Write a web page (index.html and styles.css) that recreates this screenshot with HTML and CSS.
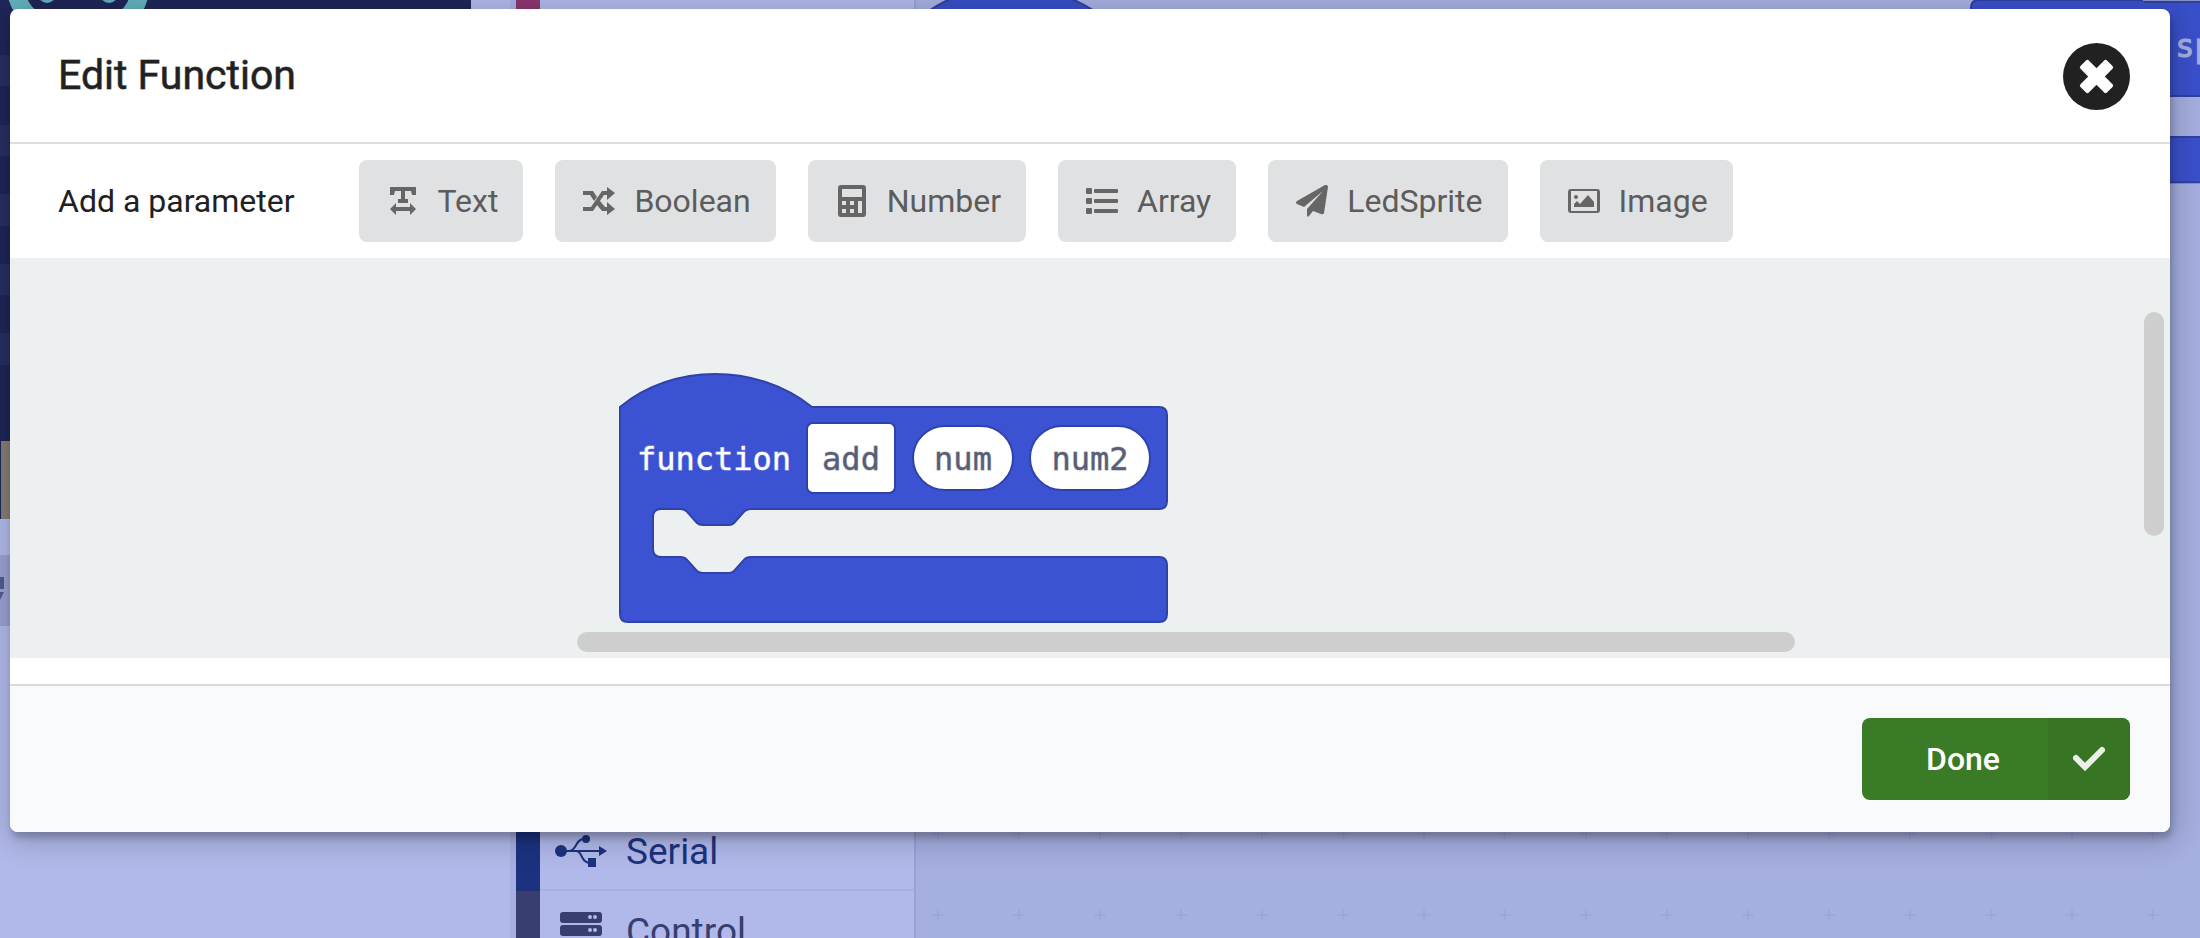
FILE: index.html
```html
<!DOCTYPE html>
<html lang="en">
<head>
<meta charset="utf-8">
<title>Edit Function</title>
<link rel="stylesheet" href="styles.css">
</head>
<body>
<div class="editor" aria-hidden="true">
  <div class="simulator">
    <svg class="board" width="471" height="519" viewBox="0 0 471 519">
      <rect width="471" height="519" fill="#1f2657"/>
      <path d="M0 55h40v31H0zM0 125h40v31H0zM0 194h40v32H0zM0 264h40v31H0zM0 333h40v32H0z" fill="#272f61"/>
      <path d="M14-24C15 0 22 18 44 24h70c20-6 27-24 28-48" fill="none" stroke="#62b0bb" stroke-width="18"/>
      <circle cx="47" cy="-6" r="9" fill="#62b0bb"/><circle cx="109" cy="-6" r="9" fill="#62b0bb"/>
      <path d="M1 441h60v78H1z" fill="#857d74"/>
    </svg>
    <div class="sim-bar">
      <svg width="12" height="72" viewBox="0 0 12 72"><path d="M0 22h4v12H0zM0 37h4l-4 8z" fill="#525a92"/></svg>
    </div>
  </div>
  <div class="toolbox">
    <div class="category basic"></div>
    <div class="category serial">
      <svg width="54" height="34" viewBox="0 0 54 34"><g fill="none" stroke="currentColor" stroke-width="2"><path d="M6 17h40M15 17c8 0 6-12 15-12M22 17c7 0 4 12 15 12"/></g><circle cx="7" cy="17" r="6" fill="currentColor"/><circle cx="32" cy="5" r="4" fill="currentColor"/><path d="M34 24h8v9h-8zM45 12l8 5-8 5z" fill="currentColor"/></svg>
      <span>Serial</span>
    </div>
    <div class="category control">
      <svg width="54" height="38" viewBox="0 0 54 38"><g fill="currentColor"><rect x="6" width="42" height="11" rx="3"/><rect x="6" y="13" width="42" height="11" rx="3"/><rect x="6" y="26" width="42" height="11" rx="3"/></g><g fill="#b1b9ea"><circle cx="36" cy="5" r="2"/><circle cx="41" cy="5" r="2"/><circle cx="36" cy="18" r="2"/><circle cx="41" cy="18" r="2"/></g></svg>
      <span>Control</span>
    </div>
  </div>
  <div class="workspace">
    <svg width="100%" height="100%">
      <defs><pattern id="grid" x="-18" y="-16" width="81" height="81" patternUnits="userSpaceOnUse"><path d="M34 40h12M40 34v12" stroke="#98a1d6"/></pattern></defs>
      <rect width="100%" height="100%" fill="url(#grid)"/>
      <path d="M4 18C53-24 134-24 188 18z" fill="#384fc5" stroke="#2f409f" stroke-width="2"/>
      <path d="M1055 183V8q0-8 8-8h164l3 2h100v94h-180v41h180v45z" fill="#3a50cb" stroke="#2f409f" stroke-width="2"/>
      <path d="M1227 0h60" stroke="#8791cb" stroke-width="2"/>
      <text x="1240" y="57" class="code-peek">.sp</text>
    </svg>
  </div>
</div>

<main class="modal" role="dialog" aria-labelledby="title">
  <header class="modal-header">
    <h1 id="title">Edit Function</h1>
    <button class="close" type="button" aria-label="Close"><svg width="67" height="67" viewBox="0 0 68 68"><circle cx="34" cy="34" r="34" fill="#212121"/><g fill="#fff" transform="rotate(45 34 34)"><rect x="15" y="28" width="38" height="12" rx="2"/><rect x="28" y="15" width="12" height="38" rx="2"/></g></svg></button>
  </header>
  <section class="params">
    <span class="params-label">Add a parameter</span>
    <button class="param" type="button"><svg viewBox="0 0 32 32"><path d="M3 2h26v8h-4l-1-4h-6v8h3v4H11v-4h3V6H8l-1 4H3zM3 24l6-6v4h14v-4l6 6-6 6v-4H9v4z"/></svg>Text</button>
    <button class="param" type="button"><svg viewBox="0 0 32 32"><path d="M24 2l8 6-8 7v-5h-3L10 26H0v-4h8L19 6h5zM0 6h10l4 6-3 4-4-6H0zM17 16l5 6h2v-5l8 7-8 6v-4h-5l-5-6z"/></svg>Boolean</button>
    <button class="param" type="button"><svg viewBox="0 0 32 32"><path fill-rule="evenodd" d="M5 0h22q3 0 3 3v26q0 3-3 3H5q-3 0-3-3V3q0-3 3-3zM6 4v8h20V4zM6 16v4h4v-4zM14 16v4h4v-4zM22 16v4h4v-4zM6 24v4h4v-4zM14 24v4h4v-4zM22 20v8h4v-8z"/></svg>Number</button>
    <button class="param" type="button"><svg viewBox="0 0 32 32"><g><rect y="3" width="6" height="6" rx="1"/><rect y="13" width="6" height="6" rx="1"/><rect y="23" width="6" height="6" rx="1"/><rect x="8" y="4" width="24" height="4" rx="1"/><rect x="8" y="14" width="24" height="4" rx="1"/><rect x="8" y="24" width="24" height="4" rx="1"/></g></svg>Array</button>
    <button class="param" type="button"><svg viewBox="0 0 32 32"><path d="M30 0q2 0 2 2l-4 26q-1 2-3 1l-8-3-4 5q-2 2-2-1v-6L27 6 8 22l-7-3q-2-1 0-3L29 0z"/></svg>LedSprite</button>
    <button class="param" type="button"><svg viewBox="0 0 32 32"><path fill-rule="evenodd" d="M3 4h26q3 0 3 3v18q0 3-3 3H3q-3 0-3-3V7q0-3 3-3zM3 6v20h26V6z"/><circle cx="8" cy="12" r="2"/><path d="M6 22v-3l3-3 3 3 8-9 6 7v5z"/></svg>Image</button>
  </section>
  <section class="canvas" aria-label="Function definition">
    <svg class="block" width="550" height="252" viewBox="0 0 550 252">
      <path d="M1 36C54-8 138-8 193 36H540q8 0 8 8V130q0 8-8 8H132c-4 0-6 1-8 4l-9 10c-2 2-3 2-5 2H84c-3 0-4 0-6-2l-9-10c-2-3-4-4-8-4H42q-8 0-8 8v32q0 8 8 8H61c4 0 6 1 8 4l9 10c2 2 3 2 6 2h26c2 0 3 0 5-2l9-10c2-3 4-4 8-4H540q8 0 8 8v49q0 8-8 8H9q-8 0-8-8z" fill="#3b53d3" stroke="#2f42a9" stroke-width="2"/>
      <g fill="#fff" stroke="#2f42a9" stroke-width="2"><rect x="188" y="52" width="88" height="70" rx="6"/><rect x="294" y="55" width="100" height="64" rx="32"/><rect x="411" y="55" width="120" height="64" rx="32"/></g>
      <g class="block-text"><text x="18" y="99" class="keyword">function</text><text x="232" y="99" text-anchor="middle">add</text><text x="344" y="99" text-anchor="middle">num</text><text x="471" y="99" text-anchor="middle">num2</text></g>
    </svg>
    <div class="scroll-x"></div>
    <div class="scroll-y"></div>
  </section>
  <footer class="modal-footer">
    <button class="done" type="button"><span class="done-label">Done</span><span class="done-icon"><svg width="32" height="26" viewBox="0 0 32 26"><path d="M3 12l9 9L29 4" fill="none" stroke="#ebf1e9" stroke-width="6" stroke-linejoin="miter" stroke-linecap="round"/></svg></span></button>
  </footer>
</main>
</body>
</html>
```

FILE: styles.css
```css
* { box-sizing: border-box; }
body {
  margin: 0;
  height: 100vh;
  overflow: hidden;
  font-family: Roboto, sans-serif;
  color: #212121;
  background: #a5afe0;
}
button { border: 0; padding: 0; font: inherit; cursor: pointer; }
svg { display: block; flex: none; }

/* Editor behind the dialog */
.editor { position: absolute; inset: 0; display: flex; overflow: hidden; }
.simulator { width: 510px; flex: none; background: #b1b9ea; }
.sim-bar { width: 471px; height: 71px; margin-top: 36px; background: #99a1d1; }
.toolbox {
  width: 406px;
  height: calc(100% + 33px);
  flex: none;
  display: flex;
  flex-direction: column;
  border-left: 6px solid #a7afe2;
  border-right: 2px solid #98a2d5;
  background: #b1b9ea;
}
.category {
  height: 80px;
  display: flex;
  align-items: center;
  gap: 18px;
  padding-left: 14px;
  border-left: 24px solid;
  font-size: 37px;
  box-shadow: inset 0 -2px #a6afe1;
}
.basic { flex: 1; border-color: #8b3770; }
.serial { color: #1c327f; border-color: #1c327f; }
.control { color: #383f70; border-color: #383f70; }
.workspace { flex: 1; min-width: 0; }
.code-peek {
  font: 32px "DejaVu Sans Mono", monospace;
  fill: #a5afe0;
  stroke: #a5afe0;
}

/* Dialog */
.modal {
  position: relative;
  margin: 9px 30px 0 10px;
  border-radius: 8px;
  overflow: hidden;
  background: #fff;
  box-shadow: 2px 6px 6px rgba(0, 0, 0, .2), 2px 6px 30px 4px rgba(0, 0, 0, .2);
}
.modal-header {
  display: flex;
  align-items: center;
  justify-content: space-between;
  padding: 34px 40px 32px 48px;
  border-bottom: 2px solid #dedede;
}
.modal-header h1 {
  margin: 0;
  padding-bottom: 3px;
  font-size: 41px;
  font-weight: 400;
  line-height: 48px;
  -webkit-text-stroke: 1px rgba(33, 33, 33, .6);
}
.close { border-radius: 50%; background: none; }
.params {
  display: flex;
  align-items: center;
  gap: 32px;
  padding: 16px 48px;
  font-size: 32px;
  white-space: nowrap;
}
.params-label { margin-right: 32px; }
.param {
  display: flex;
  align-items: center;
  height: 82px;
  gap: 19px;
  padding: 0 25px 0 28px;
  border-radius: 8px;
  background: #e0e1e2;
  color: #5c5c5c;
}
.param svg { width: 32px; height: 32px; fill: #666; }
.canvas {
  position: relative;
  height: 400px;
  padding: 113px 0 0 609px;
  background: #ecf0f1;
}
.block-text {
  font: 32px "DejaVu Sans Mono", monospace;
  fill: #575e75;
  stroke: #575e75;
  stroke-opacity: .5;
}
.keyword { fill: #fff; stroke: #fff; }
.scroll-x, .scroll-y { position: absolute; border-radius: 10px; background: #cecece; }
.scroll-x { left: 567px; right: 365px; bottom: 6px; height: 20px; }
.scroll-x { right: 375px; }
.scroll-y { right: 6px; top: 54px; width: 20px; height: 224px; }
.modal-footer {
  display: flex;
  justify-content: flex-end;
  margin-top: 26px;
  padding: 32px 40px;
  border-top: 2px solid #d9dadd;
  background: #f9fafb;
}
.done {
  display: flex;
  width: 268px;
  height: 82px;
  border-radius: 8px;
  overflow: hidden;
  background: #3a7b27;
  color: #fff;
  font-size: 32px;
  font-weight: 500;
}
.done-label, .done-icon { display: flex; align-items: center; justify-content: center; height: 100%; }
.done-label { flex: 1; padding-left: 16px; }
.done-icon { width: 82px; background: #377424; }
```
